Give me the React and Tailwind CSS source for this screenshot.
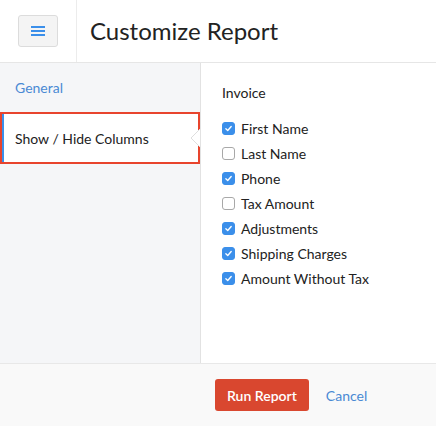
import React, { useState } from 'react';

const columns = [
    { name: 'First Name', checked: true },
    { name: 'Last Name', checked: false },
    { name: 'Phone', checked: true },
    { name: 'Tax Amount', checked: false },
    { name: 'Adjustments', checked: true },
    { name: 'Shipping Charges', checked: true },
    { name: 'Amount Without Tax', checked: true },
];

const Checkbox = ({ checked }) => (
    <span
        className={`flex h-[13px] w-[13px] items-center justify-center rounded-[3px] border ${checked ? 'border-[#3b8fea] bg-[#3b8fea]' : 'border-[#a8a8a8] bg-white'}`}
    >
        {checked && (
            <svg viewBox="0 0 12 12" className="h-[9px] w-[9px]">
                <path d="M2.5 6.2 L5 8.6 L9.6 3.4" fill="none" stroke="white" strokeWidth="1.8" strokeLinecap="round" strokeLinejoin="round" />
            </svg>
        )}
    </span>
);

const App = () => {
    const [cols, setCols] = useState(columns);

    const toggle = (i) => {
        setCols(cols.map((c, j) => (j === i ? { ...c, checked: !c.checked } : c)));
    };

    return (
        <div className="flex h-[426px] w-[436px] flex-col bg-white text-[#222]" style={{ fontFamily: 'Lato, "Open Sans", sans-serif' }}>
            {/* header */}
            <div className="flex h-[63px] shrink-0 border-b border-[#e6e6e6]">
                <div className="flex w-[77px] items-center border-r border-[#ececec] pl-[18px]">
                    <button className="flex h-[32px] w-[40px] items-center justify-center rounded-[3px] border border-[#dcdcdc] bg-[#f4f4f4]">
                        <span className="flex flex-col gap-[2px]">
                            <span className="block h-[2px] w-[14px] bg-[#3b8fea]" />
                            <span className="block h-[2px] w-[14px] bg-[#3b8fea]" />
                            <span className="block h-[2px] w-[14px] bg-[#3b8fea]" />
                        </span>
                    </button>
                </div>
                <h1 className="flex items-center pl-[13px] pb-[1px] text-[24px] text-[#222]">Customize Report</h1>
            </div>

            {/* body */}
            <div className="flex flex-1">
                <div className="w-[201px] shrink-0 border-r border-[#e2e2e2] bg-[#f5f6f8] pt-[12px]">
                    <div className="px-[15px] py-[2px] text-[14px] text-[#4a8ad4]">General</div>
                    <div className="relative mt-[12px] flex h-[52px] items-center border-2 border-[#e8442d] bg-white pl-[13px] text-[14px] text-[#222]">
                        <span className="absolute left-0 top-0 h-full w-[2px] bg-[#3b8fea]" />
                        Show / Hide Columns
                        <span className="absolute right-[-2px] top-1/2 -translate-y-1/2">
                            <svg width="10" height="18" viewBox="0 0 10 18">
                                <path d="M10 0 L1 9 L10 18" fill="white" stroke="#dedede" strokeWidth="1" />
                            </svg>
                        </span>
                    </div>
                </div>
                <div className="flex-1 pl-[21px] pt-[19px]">
                    <div className="text-[14px] text-[#222]">Invoice</div>
                    <div className="mt-[13px] flex flex-col">
                        {cols.map((c, i) => (
                            <label key={c.name} className="flex h-[25px] cursor-pointer items-center gap-[6px] text-[14px] text-[#222]" onClick={() => toggle(i)}>
                                <Checkbox checked={c.checked} />
                                {c.name}
                            </label>
                        ))}
                    </div>
                </div>
            </div>

            {/* footer */}
            <div className="flex h-[63px] shrink-0 items-center border-t border-[#e8e8e8] bg-[#f9f9f9] pl-[215px]">
                <button className="h-[32px] rounded-[3px] bg-[#d9472f] px-[12px] text-[14px] font-semibold text-white">Run Report</button>
                <button className="ml-[17px] text-[14px] text-[#4a8ad4]">Cancel</button>
            </div>
        </div>
    );
};

export default App;
